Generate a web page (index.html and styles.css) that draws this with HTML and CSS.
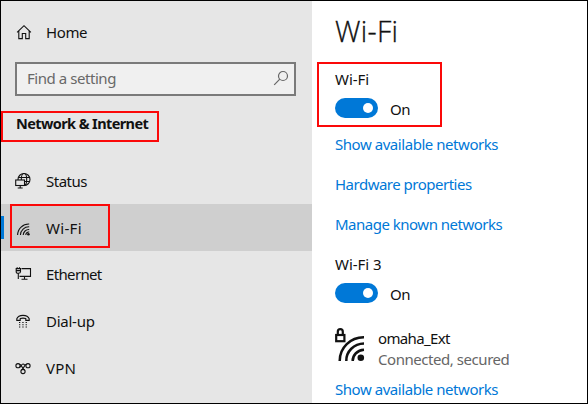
FILE: index.html
```html
<!DOCTYPE html>
<html lang="en">
<head>
<meta charset="utf-8">
<title>Settings</title>
<link rel="stylesheet" href="styles.css">
</head>
<body>
<div class="window">
  <nav class="sidebar">
    <a class="item home">
      <svg class="icon" viewBox="0 0 16 16"><path d="M2.100 8.400 9 1.700 15.900 8.400M3.800 7v7.600h3.500V9.500h3.400v5.100h3.500V7"/></svg>
      <span class="t-home">Home</span>
    </a>
    <div class="search">
      <span class="t-find">Find a setting</span>
      <svg class="lens" viewBox="0 0 16 16"><circle cx="10" cy="6" r="4.500"/><path d="M6.800 9.200 1.200 14.800"/></svg>
    </div>
    <h2 class="section"><span class="t-net">Network &amp; Internet</span></h2>
    <div class="items">
      <a class="item">
        <svg class="icon" viewBox="0 0 16 16"><circle cx="9" cy="6.500" r="6"/><ellipse cx="9" cy="6.500" rx="2.700" ry="6"/><path d="M3.500 4.500h11M3.500 8.500h11"/><rect class="screen" x=".700" y="7" width="8.800" height="5.500"/><path d="M5.200 12.500v2.500M2.700 15h5"/></svg>
        <span class="t-status">Status</span>
      </a>
      <a class="item active">
        <svg class="icon" viewBox="0 0 16 16"><path d="M2.600 15A11.200 11.200 0 0 1 14.200 4M5.400 15A8.500 8.500 0 0 1 14.200 6.800M8.200 15A5.700 5.700 0 0 1 14.200 9.500M10.800 15a3 3 0 0 1 3.400-3"/><circle class="dot" cx="13.400" cy="14.200" r="1.300"/></svg>
        <span class="t-wifi">Wi-Fi</span>
      </a>
      <a class="item">
        <svg class="icon" viewBox="0 0 16 16"><path d="M6.500 2.600h9v7.800H4.500M9.500 10.400v2.600M6.500 13.200h6M1.200 2.600h4.300v3.200q0 1.500-2.150 1.500T1.200 5.800zM.7 4.600h5.300M2.200 2.600V1.300M4.500 2.600V1.300M3.300 7.300V13"/></svg>
        <span class="t-eth">Ethernet</span>
      </a>
      <a class="item">
        <svg class="icon" viewBox="0 0 16 16"><path d="M1.800 7.400V5.800C3.500 1.200 12.500 1.200 14.200 5.800v1.600h-3.400V5.600q-2.800-1-5.600 0v1.800z"/><path class="dots" d="M4 9.500h9M4 11.800h9M4 14h9"/></svg>
        <span class="t-dial">Dial-up</span>
      </a>
      <a class="item">
        <svg class="icon" viewBox="0 0 16 16"><circle cx="3" cy="5.700" r="2.100"/><circle cx="13" cy="5.700" r="2.100"/><circle cx="8" cy="11.500" r="2.100"/><path d="M4.500 4.200C7 4.500 7 9 9.500 10M11.500 4.200C9 4.500 9 9 6.500 10M4.500 7.200C6.300 7 6.300 4 8 4q1 0 1.500 1"/></svg>
        <span class="t-vpn">VPN</span>
      </a>
    </div>
  </nav>
  <main class="main">
    <h1 class="title">Wi-Fi</h1>
    <section class="adapter marked">
      <div class="label t-label">Wi-Fi</div>
      <div class="row"><span class="toggle"></span><span class="t-on">On</span></div>
    </section>
    <div class="links">
      <a class="t-show">Show available networks</a>
      <a class="t-hard">Hardware properties</a>
      <a class="t-manage">Manage known networks</a>
    </div>
    <section class="adapter">
      <div class="label t-label">Wi-Fi 3</div>
      <div class="row"><span class="toggle"></span><span class="t-on">On</span></div>
    </section>
    <div class="network">
      <svg class="signal" viewBox="0 0 32 36"><rect class="lock" x="1.200" y="7" width="8.200" height="6.200"/><path class="lock" d="M2.800 7V3.700a2.500 2.500 0 0 1 5 0V7"/><path d="M4.700 33A24 23.500 0 0 1 29 9.200M11.300 33A18 17 0 0 1 29 15.500M17.700 33A12 11 0 0 1 29 21.700"/><circle class="dot" cx="25.800" cy="29.800" r="3.300"/></svg>
      <div class="info"><div class="t-ssid">omaha_Ext</div><div class="state t-state">Connected, secured</div></div>
    </div>
    <a class="last t-show">Show available networks</a>
  </main>
</div>
</body>
</html>
```
FILE: styles.css
```css
*, *::before, *::after { box-sizing: border-box; }
body {
  margin: 0;
  font: 15px/20px "Noto Sans", "Open Sans", sans-serif;
  color: #111;
}
.window {
  display: flex;
  width: 588px;
  height: 404px;
  border: 1px solid #000;
  overflow: hidden;
  background: #fff;
}
.sidebar { width: 311px; background: #e6e6e6; padding-top: 8px; }
.item {
  position: relative;
  display: flex;
  align-items: center;
  height: 46.700px;
  padding-left: 14px;
}
.icon {
  width: 16px;
  height: 16px;
  margin-right: 15px;
  overflow: visible;
  fill: none;
  stroke: #111;
  stroke-width: 1.100;
}
.screen { fill: #e6e6e6; }
.dot { fill: #111; stroke: none; }
.dots { stroke-dasharray: 1.300 2; }
.home { height: 45px; }
.search {
  display: flex;
  align-items: center;
  justify-content: space-between;
  width: 281px;
  height: 34px;
  margin: 8px 0 0 14px;
  padding: 0 5px 2px 10px;
  border: 2px solid #7a7a7a;
  background: #f0f0f0;
  color: #686868;
}
.lens { width: 16px; height: 16px; fill: none; stroke: #666; stroke-width: 1.200; }
.section {
  width: 158px;
  height: 31px;
  margin: 15px 0 0;
  padding: 0 0 0 13px;
  border: 2px solid #fb0909;
  font-size: 14.500px;
  line-height: 21px;
  font-weight: 700;
  white-space: nowrap;
}
.items { margin-top: 15.500px; }
.active { background: #cfcfcf; }
.active::before {
  content: "";
  position: absolute;
  left: 0;
  top: 12px;
  width: 3px;
  height: 23px;
  background: #0078d7;
}
.active::after {
  content: "";
  position: absolute;
  left: 9px;
  top: 0;
  width: 100px;
  height: 44px;
  border: 2px solid #fb0909;
}
.main { display: flex; flex-direction: column; width: 275px; padding-left: 23px; }
.title {
  margin: 10px 0 0;
  height: 41px;
  font: 300 28.500px/40px "Open Sans", "Noto Sans", sans-serif;
  letter-spacing: .300px;
  -webkit-text-stroke: .300px #111;
}
.marked { width: 125px; height: 65px; margin: 10px 0 0 -18px; padding: 5px 0 0 16px; border: 2px solid #fb0909; }
.label { height: 20px; }
.row { display: flex; align-items: flex-end; height: 25px; margin-top: 4.500px; margin-bottom: .500px; gap: 12px; }
.toggle {
  position: relative;
  width: 43px;
  height: 20px;
  margin-bottom: 1px;
  border-radius: 10px;
  background: #0078d7;
}
.toggle::after {
  content: "";
  position: absolute;
  right: 5px;
  top: 5px;
  width: 10px;
  height: 10px;
  border-radius: 50%;
  background: #fff;
}
.links { display: grid; grid-auto-rows: 40px; margin-top: 7px; }
a { white-space: nowrap; }
.main a { color: #0078d7; }
.network { display: flex; height: 42px; margin-top: 24px; gap: 11px; }
.signal { width: 32px; height: 36px; fill: none; stroke: #111; stroke-width: 2.500; }
.signal .lock { stroke-width: 2.200; }
.signal .dot { stroke: none; }
.info { line-height: 21px; white-space: nowrap; }
.state { color: #666; }
.last { margin-top: 9px; }
.t-home { letter-spacing: -.400px; }
.t-find, .t-show, .t-state { letter-spacing: -.450px; }
.t-net { letter-spacing: -.600px; }
.t-status, .t-on { letter-spacing: -.500px; }
.t-wifi { letter-spacing: .300px; }
.t-eth { letter-spacing: -.650px; }
.t-dial { letter-spacing: -.250px; }
.t-label { letter-spacing: -.050px; }
.t-vpn { letter-spacing: .200px; }
.t-hard, .t-manage { letter-spacing: -.500px; }
.t-ssid { letter-spacing: -.650px; }
```
